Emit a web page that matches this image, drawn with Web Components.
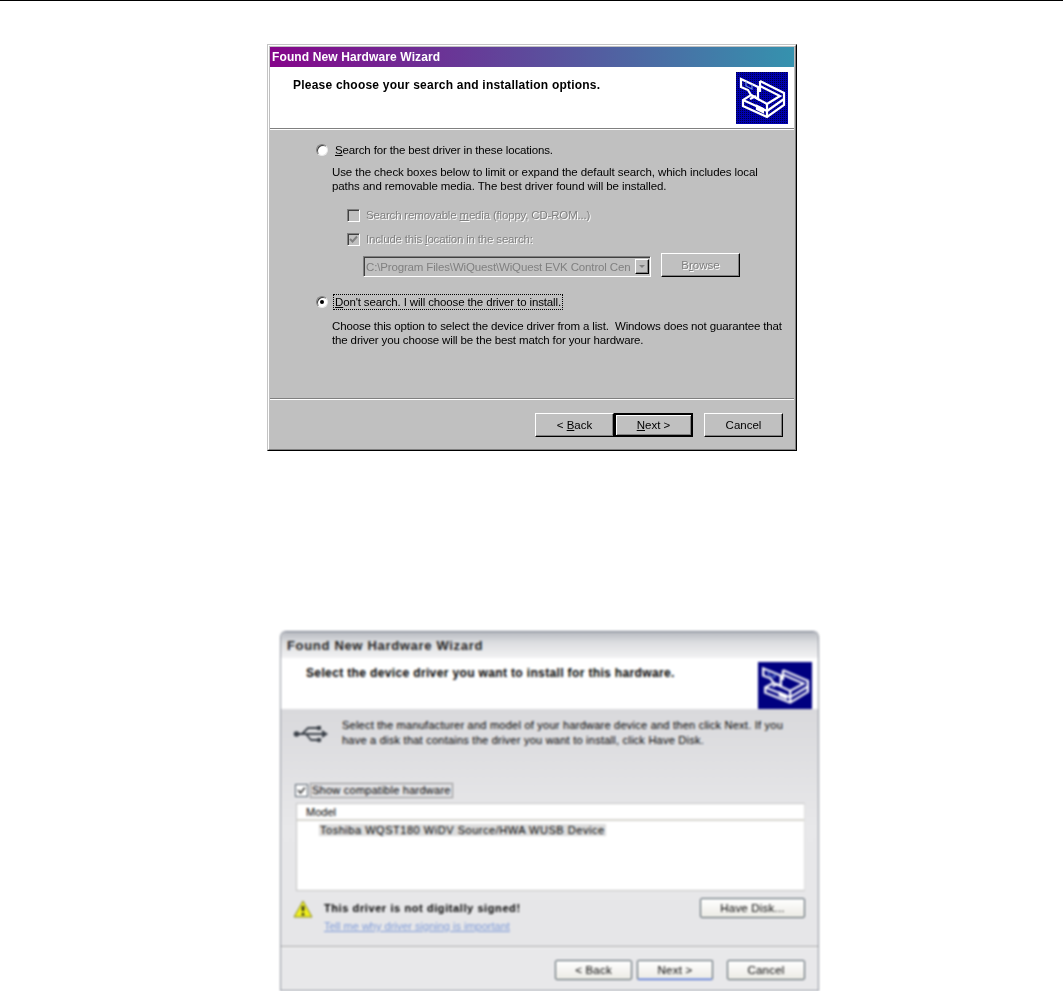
<!DOCTYPE html>
<html>
<head>
<meta charset="utf-8">
<title>Found New Hardware Wizard</title>
<style>
  html, body { margin: 0; background: #fff; }
  body { font: 11px "Liberation Sans", Arial, sans-serif; color: #000; height: 991px; overflow: hidden; }
  .rule { height: 1px; background: #000; }
  classic-wizard { margin: 43px 0 0 267px; }
  xp-wizard { margin: 180px 0 0 280px; }
  u { text-decoration: underline; }
</style>
</head>
<body>
<div class="rule"></div>

<classic-wizard heading="Please choose your search and installation options.">
  <wiz-radio>
    <span><u>S</u>earch for the best driver in these locations.</span>
  </wiz-radio>
  <wiz-note>Use the check boxes below to limit or expand the default search, which includes local<br>paths and removable media. The best driver found will be installed.</wiz-note>
  <wiz-check class="first" disabled>Search removable <u>m</u>edia (floppy, CD-ROM...)</wiz-check>
  <wiz-check class="second" disabled checked>Include this <u>l</u>ocation in the search:</wiz-check>
  <div class="pathrow">
    <wiz-combo>C:\Program Files\WiQuest\WiQuest EVK Control Cen</wiz-combo>
    <wiz-button disabled>B<u>r</u>owse</wiz-button>
  </div>
  <wiz-radio checked focused>
    <span><u>D</u>on't search. I will choose the driver to install.</span>
  </wiz-radio>
  <wiz-note class="last">Choose this option to select the device driver from a list.&nbsp; Windows does not guarantee that<br>the driver you choose will be the best match for your hardware.</wiz-note>
  <wiz-button slot="footer">&lt; <u>B</u>ack</wiz-button>
  <wiz-button slot="footer" default><u>N</u>ext &gt;</wiz-button>
  <wiz-button slot="footer" class="cancel">Cancel</wiz-button>
</classic-wizard>

<xp-wizard></xp-wizard>

<script>
// shared drawing of the wizard's drive bay logo
class HwIcon extends HTMLElement {
  constructor() {
    super();
    this.attachShadow({mode: 'open'}).innerHTML = `
      <style>
        :host { display: block; width: 52px; height: 52px; flex: none; }
        :host([solid]) { width: 54px; height: 47px; }
        svg { display: block; width: 100%; height: 100%; }
        .dots { fill: url(#dots); }
        :host([solid]) .dots { fill: #000080; }
      </style>
      <svg viewBox="0 0 52 52" preserveAspectRatio="none">
        <defs>
          <pattern id="dots" width="2" height="2" patternUnits="userSpaceOnUse">
            <rect width="2" height="2" fill="#0000b0"/>
            <rect width="1" height="1" fill="#000040"/>
          </pattern>
        </defs>
        <rect class="dots" width="52" height="52"/>
        <g fill="none" stroke="#fff" stroke-width="2.2">
          <path d="M5 7 L22 15 V27 L15 23 L12 18 L5 15 Z"/>
          <path d="M10 9.5 V14 L16 17 V12.5" stroke-width="1.2" stroke="#6f8fe0"/>
          <path d="M24 9 L48 21 V33 L31 45 L7 34 V28 L15 23 L31 32"/>
          <path d="M24 9 V20"/>
          <path d="M24 14 L44 24 L31 32"/>
          <path d="M7 28 L31 39 V45"/>
          <path d="M31 39 L48 27"/>
          <path d="M31 32 V39"/>
          <path d="M14 27 L20 24"/>
          <path d="M21 34 L27 37 V40 L21 37 Z" fill="#fff"/>
        </g>
      </svg>`;
  }
}
customElements.define('hw-icon', HwIcon);

const classicTemplate = document.createElement('template');
classicTemplate.innerHTML = `
  <style>
    :host { display: block; box-sizing: border-box; width: 530px; height: 407px; background: #c0c0c0;
      border: 1px solid; border-color: #c4c4c4 #000 #000 #c4c4c4; filter: blur(.35px); }
    .frame { height: 100%; box-sizing: border-box; border: 1px solid; border-color: #fff #808080 #808080 #fff;
      padding: 1px; display: flex; flex-direction: column; }
    .title { height: 20px; flex: none; padding: 0 2px; display: flex; align-items: center;
      background: linear-gradient(90deg, #85058a, #3592ae); color: #fff; font: bold 12px "Liberation Sans", sans-serif; letter-spacing: .12px; }
    .head { height: 61px; flex: none; background: #fff; display: flex; justify-content: space-between;
      padding: 5px 6px 0 23px; box-sizing: border-box; }
    .head p { margin: 6px 0 0; font: bold 12px "Liberation Sans", sans-serif; letter-spacing: .22px; }
    .etch { height: 1px; background: #808080; border-bottom: 1px solid #fff; flex: none; }
    .body { flex: 1; padding: 12px 0 0 46px; display: flex; flex-direction: column; }
    .foot { flex: none; height: 50px; border-top: 1px solid #808080; box-shadow: inset 0 1px #fff;
      display: flex; justify-content: flex-end; padding: 14px 11px 0 0; box-sizing: border-box; }
    ::slotted(.cancel) { margin-left: 11px; }
    ::slotted(wiz-check.first) { margin: 15px 0 0 31px; }
    ::slotted(wiz-check.second) { margin: 10px 0 0 31px; }
    ::slotted(.pathrow) { display: flex; gap: 10px; align-items: flex-end; margin: 7px 0 17px 47px; }
    ::slotted(wiz-note.last) { margin-top: 9px; letter-spacing: -.14px; }
  </style>
  <div class="frame">
    <div class="title">Found New Hardware Wizard</div>
    <div class="head"><p></p><hw-icon></hw-icon></div>
    <div class="etch"></div>
    <div class="body"><slot></slot></div>
    <div class="foot"><slot name="footer"></slot></div>
  </div>`;

class ClassicWizard extends HTMLElement {
  constructor() {
    super();
    this.attachShadow({mode: 'open'}).appendChild(classicTemplate.content.cloneNode(true));
  }
  connectedCallback() {
    this.shadowRoot.querySelector('.head p').textContent = this.getAttribute('heading');
  }
}
customElements.define('classic-wizard', ClassicWizard);

class WizRadio extends HTMLElement {
  constructor() {
    super();
    this.attachShadow({mode: 'open'}).innerHTML = `
      <style>
        :host { display: flex; align-items: center; height: 16px; font: 11.5px "Liberation Sans", sans-serif; }
        .dot { width: 12px; height: 12px; box-sizing: border-box; border-radius: 50%; background: #fff; flex: none;
          border: 1px solid; border-color: #808080 #e8e8e8 #e8e8e8 #808080; box-shadow: inset 1px 1px 0 #404040;
          display: flex; align-items: center; justify-content: center; }
        .dot i { width: 4px; height: 4px; border-radius: 50%; background: #000; display: none; }
        :host([checked]) .dot i { display: block; }
        .text { margin-left: 5px; padding: 0 1px; border: 1px solid transparent; line-height: 14px; letter-spacing: -.14px; }
        :host([focused]) .text { border: 1px dotted #000; }
      </style>
      <span class="dot"><i></i></span><span class="text"><slot></slot></span>`;
  }
}
customElements.define('wiz-radio', WizRadio);

class WizNote extends HTMLElement {
  constructor() {
    super();
    this.attachShadow({mode: 'open'}).innerHTML = `
      <style>
        :host { display: block; margin: 7px 0 0 16px; font: 11.5px/14px "Liberation Sans", sans-serif; letter-spacing: -.09px; white-space: nowrap; }
      </style><slot></slot>`;
  }
}
customElements.define('wiz-note', WizNote);

class WizCheck extends HTMLElement {
  constructor() {
    super();
    this.attachShadow({mode: 'open'}).innerHTML = `
      <style>
        :host { display: flex; align-items: center; height: 14px; font: 11.5px "Liberation Sans", sans-serif; letter-spacing: -.18px; }
        :host([disabled]) { color: #808080; text-shadow: 1px 1px 0 #fff; }
        .box { width: 13px; height: 13px; box-sizing: border-box; flex: none; background: #c0c0c0; margin-right: 6px;
          border: 1px solid; border-color: #808080 #fff #fff #808080; box-shadow: inset 1px 1px 0 #404040;
          display: flex; align-items: center; justify-content: center; }
        svg { display: none; width: 9px; height: 9px; }
        :host([checked]) svg { display: block; }
      </style>
      <span class="box"><svg viewBox="0 0 9 9"><path d="M1 4 L3.5 6.5 L8 1.5" fill="none" stroke="#808080" stroke-width="2"/></svg></span><span><slot></slot></span>`;
  }
}
customElements.define('wiz-check', WizCheck);

class WizCombo extends HTMLElement {
  constructor() {
    super();
    this.attachShadow({mode: 'open'}).innerHTML = `
      <style>
        :host { display: flex; align-items: center; box-sizing: border-box; width: 288px; height: 21px; overflow: hidden;
          border: 1px solid; border-color: #808080 #fff #fff #808080; box-shadow: inset 1px 1px 0 #404040;
          color: #808080; font: 11.5px "Liberation Sans", sans-serif; letter-spacing: -.15px; padding: 0 1px 0 2px; white-space: nowrap; }
        .val { flex: 1; overflow: hidden; }
        .arrow { width: 14px; height: 15px; box-sizing: border-box; flex: none; border: 1px solid; background: #c0c0c0;
          border-color: #fff #000 #000 #fff; box-shadow: inset -1px -1px 0 #808080; display: flex; align-items: center; justify-content: center; }
        .arrow i { border: 3px solid transparent; border-top: 3px solid #808080; border-bottom: 0; }
      </style>
      <span class="val"><slot></slot></span><span class="arrow"><i></i></span>`;
  }
}
customElements.define('wiz-combo', WizCombo);

class WizButton extends HTMLElement {
  constructor() {
    super();
    this.attachShadow({mode: 'open'}).innerHTML = `
      <style>
        :host { display: flex; align-items: center; justify-content: center; box-sizing: border-box; width: 79px; height: 24px;
          border: 1px solid; border-color: #fff #000 #000 #fff; box-shadow: inset -1px -1px 0 #808080;
          font: 11.5px "Liberation Sans", sans-serif; background: #c0c0c0; flex: none; }
        :host([default]) { border: 2px solid #000; box-shadow: inset 1px 1px 0 #fff, inset -1px -1px 0 #808080; }
        :host([disabled]) { color: #808080; text-shadow: 1px 1px 0 #fff; }
      </style><span><slot></slot></span>`;
  }
}
customElements.define('wiz-button', WizButton);

class XpButton extends HTMLElement {
  constructor() {
    super();
    this.attachShadow({mode: 'open'}).innerHTML = `
      <style>
        :host { display: flex; align-items: center; justify-content: center; box-sizing: border-box; height: 20px; flex: none;
          border: 1px solid #4c5a62; border-radius: 2px; background: linear-gradient(#fff, #ecebe5); font: 11.5px "Liberation Sans", sans-serif; letter-spacing: .2px; }
        :host([default]) { border-bottom: 1px solid #2f56c8; box-shadow: inset 0 -1px #b9c8ee; }
      </style><slot></slot>`;
  }
}
customElements.define('xp-button', XpButton);

class XpWizard extends HTMLElement {
  constructor() {
    super();
    this.attachShadow({mode: 'open'}).innerHTML = `
      <style>
        :host { display: flex; flex-direction: column; box-sizing: border-box; width: 539px; height: 360px; border-radius: 6px 6px 0 0; overflow: hidden;
          border: 1px solid #8d929c; border-top-color: #6f7484; background: #e8e8ea; filter: blur(.9px);
          font: 11px "Liberation Sans", sans-serif; }
        .title { height: 26px; flex: none; box-sizing: border-box; padding: 0 0 0 6px; display: flex; align-items: center;
          background: linear-gradient(#b7bac0, #dcdde0 40%, #f2f2f3); font: bold 13px "Liberation Sans", sans-serif; letter-spacing: .68px; color: #222; }
        .head { height: 51px; flex: none; box-sizing: border-box; background: #fff; display: flex; justify-content: space-between; padding: 4px 6px 0 25px; }
        .head p { margin: 4px 0 0; font: bold 12px "Liberation Sans", sans-serif; letter-spacing: .36px; }
        .main { flex: 1; display: flex; flex-direction: column; background: linear-gradient(#d9d9dc, #e8e8ea 50%, #e6e6e8); padding: 9px 13px 0 14px; }
        .intro { display: flex; align-items: flex-start; gap: 14px; height: 30px; line-height: 15px; letter-spacing: .24px; white-space: nowrap; }
        .intro svg { width: 35px; height: 22px; flex: none; margin: 5px 0 0 -2px; }
        .show { display: inline-flex; align-self: flex-start; align-items: center; margin: 35px 0 0 0; }
        .show b { width: 11px; height: 11px; border: 1px solid #55606c; background: #fff; margin-right: 2px; display: flex; align-items: center; justify-content: center; }
        .show b svg { width: 9px; height: 9px; }
        .show span { border: 1px dotted #333; padding: 0 1px; letter-spacing: .25px; line-height: 13px; }
        .list { margin: 5px 0 0 1px; height: 88px; box-sizing: border-box; background: #fff; border: 1px solid #c2c2c2; border-right-color: #dedede; }
        .list .hd { height: 17px; box-sizing: border-box; padding: 2px 0 0 9px; border-bottom: 2px solid #d6d5ce; }
        .list .row { margin: 3px 0 0 22px; display: inline-block; background: #dcdcdc; padding: 0 1px; letter-spacing: .53px; }
        .sign { display: flex; align-items: flex-start; margin-top: 5px; height: 48px; }
        .sign svg { width: 20px; height: 18px; margin: 4px 0 0 -2px; flex: none; }
        .sign div { margin: 3px 0 0 11px; flex: 1; line-height: 18px; }
        .sign strong { letter-spacing: .59px; display: block; }
        .sign a { color: #7d9ad8; text-decoration: underline; }
        .sign xp-button { width: 105px; margin-top: 2px; }
        .foot { height: 44px; flex: none; box-sizing: border-box; border-top: 1px solid #9f9f9f; background: #e8e8ea; box-shadow: inset 0 1px #fff;
          display: flex; justify-content: flex-end; padding: 13px 13px 0 0; gap: 5px; }
        .foot xp-button { width: 76px; }
        .foot xp-button:first-child { width: 77px; }
        .foot xp-button:last-child { width: 78px; margin-left: 9px; }
      </style>
      <div class="title">Found New Hardware Wizard</div>
      <div class="head"><p>Select the device driver you want to install for this hardware.</p><hw-icon solid></hw-icon></div>
      <div class="main">
        <div class="intro">
          <svg viewBox="0 0 35 22"><g fill="none" stroke="#3a4048" stroke-width="1.8"><path d="M2 11 H30"/><path d="M9 11 L15 5 H25"/><path d="M13 11 L18 17 H25"/></g><path d="M29 7 L35 11 L29 15 Z" fill="#3a4048"/><circle cx="3.5" cy="11" r="2.8" fill="#3a4048"/><rect x="24" y="3" width="4" height="4" fill="#3a4048"/><circle cx="26" cy="17" r="2.3" fill="#3a4048"/></svg>
          <div>Select the manufacturer and model of your hardware device and then click Next. If you<br>have a disk that contains the driver you want to install, click Have Disk.</div>
        </div>
        <div class="show"><b><svg viewBox="0 0 9 9"><path d="M1 4 L3.5 7 L8 1.5" fill="none" stroke="#333" stroke-width="1.5"/></svg></b><span>Show compatible hardware</span></div>
        <div class="list">
          <div class="hd">Model</div>
          <span class="row">Toshiba WQST180 WiDV Source/HWA WUSB Device</span>
        </div>
        <div class="sign">
          <svg viewBox="0 0 20 18"><path d="M10 1 L19 17 H1 Z" fill="#f0f01e" stroke="#8a8a20" stroke-linejoin="round"/><path d="M10 6 V11" stroke="#222" stroke-width="2.4"/><rect x="8.8" y="13" width="2.4" height="2.4" fill="#222"/></svg>
          <div><strong>This driver is not digitally signed!</strong><a>Tell me why driver signing is important</a></div>
          <xp-button>Have Disk...</xp-button>
        </div>
      </div>
      <div class="foot">
        <xp-button>&lt; Back</xp-button>
        <xp-button default>Next &gt;</xp-button>
        <xp-button>Cancel</xp-button>
      </div>`;
  }
}
customElements.define('xp-wizard', XpWizard);
</script>
</body>
</html>
